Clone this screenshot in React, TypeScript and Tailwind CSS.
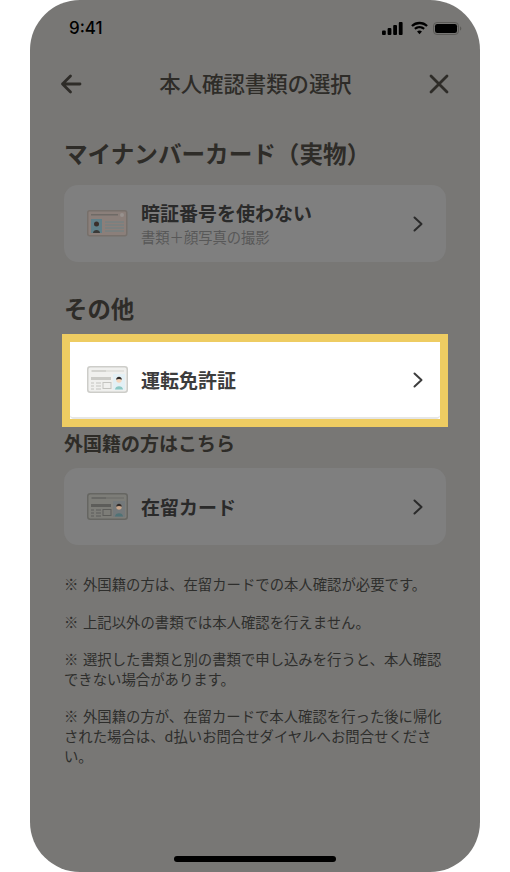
import React from 'react';

const FONT = "font-['Noto_Sans_CJK_JP','Liberation_Sans',sans-serif]";

const MynaIcon = () => (
  <svg width="42" height="28" viewBox="0 0 42 28" className="shrink-0">
    <rect x="0.75" y="0.75" width="39" height="25" rx="2" fill="#8b7f7a" stroke="#77706b" strokeWidth="1.5" />
    <rect x="4" y="4" width="27" height="1.5" fill="#6f6a66" />
    <circle cx="35" cy="5" r="2" fill="#98928e" />
    <rect x="4" y="9" width="11" height="14" fill="#5f7f88" />
    <circle cx="9.5" cy="14" r="2.5" fill="#3a2f2a" />
    <path d="M6 23c0-4 7-4 7 0z" fill="#3a3a38" />
    <path d="M18 12h19M18 15h19M18 18h19M18 21h19" stroke="#6c8284" strokeWidth="1" />
  </svg>
);

const LicenseIcon = ({ dim }: { dim?: boolean }) => (
  <svg width="42" height="28" viewBox="0 0 42 28" className="shrink-0">
    <rect
      x="0.75"
      y="0.75"
      width="39.5"
      height="25.5"
      rx="2.5"
      fill={dim ? '#7d7d78' : '#f0f0ee'}
      stroke={dim ? '#666662' : '#cdcdc9'}
      strokeWidth="1.5"
    />
    <rect x="4" y="4" width="33" height="2" fill={dim ? '#73736f' : '#e2e2de'} />
    <rect x="5" y="4.5" width="14" height="1" fill={dim ? '#5f5f5c' : '#c4c4c0'} />
    <rect x="4" y="11" width="20" height="3" fill={dim ? '#5d5d5a' : '#cbcbc7'} />
    <path d="M4 17h3M9 17h5M4 20h3M9 20h5M4 23h3M9 23h5" stroke={dim ? '#5d5d5a' : '#c4c4c0'} strokeWidth="1" />
    <rect x="16" y="16.5" width="8" height="6" fill="none" stroke={dim ? '#5d5d5a' : '#c4c4c0'} strokeWidth="1" />
    <rect x="26" y="8" width="12" height="16" fill={dim ? '#74797b' : '#e3f0f5'} />
    <circle cx="32" cy="14" r="2.7" fill={dim ? '#c9a78c' : '#f6d5bb'} />
    <path d="M29.2 13.7c0-3.8 5.6-3.8 5.6 0-1.600-1-4-1-5.600 0z" fill="#2f2a28" />
    <path d="M28 23.500c0-4.500 8-4.500 8 0z" fill={dim ? '#4f7276' : '#8cc8c4'} />
  </svg>
);

const Chevron = ({ color }: { color: string }) => (
  <svg width="12" height="18" viewBox="0 0 12 18" className="shrink-0">
    <path d="M2.5 2.5 9.5 9l-7 6.5" fill="none" stroke={color} strokeWidth="2" strokeLinecap="round" strokeLinejoin="round" />
  </svg>
);

const StatusIcons = () => (
  <div className="flex items-center">
    <svg width="21" height="13" viewBox="0 0 21 13">
      <rect x="0" y="8.500" width="3.800" height="4.500" rx="1" fill="#000" />
      <rect x="5.600" y="6" width="3.800" height="7" rx="1" fill="#000" />
      <rect x="11.200" y="3" width="3.800" height="10" rx="1" fill="#000" />
      <rect x="16.800" y="0" width="3.800" height="13" rx="1" fill="#000" />
    </svg>
    <svg width="19" height="14" viewBox="0 0 18 13" className="ml-[7px]">
      <path d="M9 2.900c2.500 0 4.700.9 6.400 2.500l1.500-1.600A11.400 11.400 0 0 0 9 .6 11.400 11.400 0 0 0 1.100 3.800l1.500 1.600A9.200 9.200 0 0 1 9 2.900z" fill="#000" />
      <path d="M9 6.800c1.400 0 2.600.5 3.600 1.400l1.500-1.600A7.400 7.400 0 0 0 9 4.500a7.400 7.400 0 0 0-5.100 2.100l1.500 1.600c1-.9 2.200-1.400 3.600-1.400z" fill="#000" />
      <path d="M9 8.800c-.9 0-1.700.3-2.300.9L9 12.400l2.300-2.700c-.6-.6-1.400-.9-2.300-.9z" fill="#000" />
    </svg>
    <svg width="29" height="13" viewBox="0 0 29 13" className="ml-[4px]">
      <rect x="0.500" y="0.500" width="25" height="12" rx="3.500" fill="none" stroke="#5b5a57" />
      <rect x="2" y="2" width="22" height="9" rx="2.200" fill="#000" />
      <path d="M27 4.500v4c.8-.3 1.300-1.100 1.300-2s-.5-1.700-1.300-2z" fill="#5b5a57" />
    </svg>
  </div>
);

const Notes = [
  '※ 外国籍の方は、在留カードでの本人確認が必要です。',
  '※ 上記以外の書類では本人確認を行えません。',
  '※ 選択した書類と別の書類で申し込みを行うと、本人確認できない場合があります。',
  '※ 外国籍の方が、在留カードで本人確認を行った後に帰化された場合は、d払いお問合せダイヤルへお問合せください。',
];

export default function App() {
  return (
    <div className={`w-[510px] h-[872px] bg-white px-[30px] ${FONT}`}>
      <div className="relative flex flex-col h-[872px] overflow-hidden rounded-[50px] bg-[#787775]">
        {/* status bar */}
        <div className="flex items-center justify-between h-[56px] pl-[39px] pr-[18px]">
          <span className="font-['Inter',sans-serif] text-[17px] leading-[20px] font-medium text-black">9:41</span>
          <StatusIcons />
        </div>

        {/* header */}
        <div className="flex items-center justify-between h-[56px] pl-[30px] pr-[31px]">
          <svg width="22" height="20" viewBox="0 0 22 20">
            <path d="M20 10H2.500M10.500 2 2.500 10l8 8" fill="none" stroke="#2e2c28" strokeWidth="2.800" strokeLinecap="round" strokeLinejoin="round" />
          </svg>
          <h1 className="pb-[2px] text-[21.400px] leading-[28px] font-medium text-[#2e2c28]">本人確認書類の選択</h1>
          <svg width="20" height="20" viewBox="0 0 20 20">
            <path d="M2 2l16 16M18 2 2 18" fill="none" stroke="#2e2c28" strokeWidth="2.800" strokeLinecap="round" />
          </svg>
        </div>

        <div className="flex flex-col px-[34px]">
          <h2 className="mt-[24px] text-[23.600px] leading-[34px] font-bold text-[#2e2c28]">マイナンバーカード（実物）</h2>
          <div className="mt-[15px] flex items-center h-[77px] rounded-[14px] bg-[#7f7f7f] pl-[23px] pr-[22px]">
            <MynaIcon />
            <div className="ml-[12px] flex-1 pt-[1px]">
              <p className="text-[19px] leading-[24px] font-bold text-[#2a2a2a]">暗証番号を使わない</p>
              <p className="mt-[2px] text-[14.300px] leading-[20px] text-[#585858]">書類＋顔写真の撮影</p>
            </div>
            <Chevron color="#2a2a2a" />
          </div>

          <h2 className="mt-[29px] text-[23.400px] leading-[34px] font-bold text-[#2e2c28]">その他</h2>

          <div className="mt-[9px] -mx-[2px] border-[8px] border-[#eecc62] bg-white">
            <div className="flex items-center h-[77px] rounded-b-[4px] border-b-[2px] border-[#e6e6e6] pl-[17px] pr-[16px]">
              <LicenseIcon />
              <p className="ml-[12px] flex-1 text-[19px] leading-[26px] font-bold text-[#3d3d3d]">運転免許証</p>
              <Chevron color="#3d3d3d" />
            </div>
          </div>

          <h2 className="mt-[2px] text-[19px] leading-[28px] font-bold text-[#2e2c28]">外国籍の方はこちら</h2>
          <div className="mt-[11px] flex items-center h-[77px] rounded-[14px] bg-[#7f7f7f] pl-[23px] pr-[22px]">
            <LicenseIcon dim />
            <p className="ml-[12px] flex-1 text-[19px] leading-[26px] font-bold text-[#2a2a2a]">在留カード</p>
            <Chevron color="#2a2a2a" />
          </div>

          <div className="mt-[29px] flex flex-col gap-[18px]">
            {Notes.map((n) => (
              <p key={n} className="text-[14.360px] leading-[19.600px] [word-spacing:1.4px] text-[#2e2e2c]">
                {n}
              </p>
            ))}
          </div>
        </div>

        {/* home indicator */}
        <div className="mt-auto mb-[10px] self-center w-[162px] h-[6px] rounded-full bg-black" />
      </div>
    </div>
  );
}
